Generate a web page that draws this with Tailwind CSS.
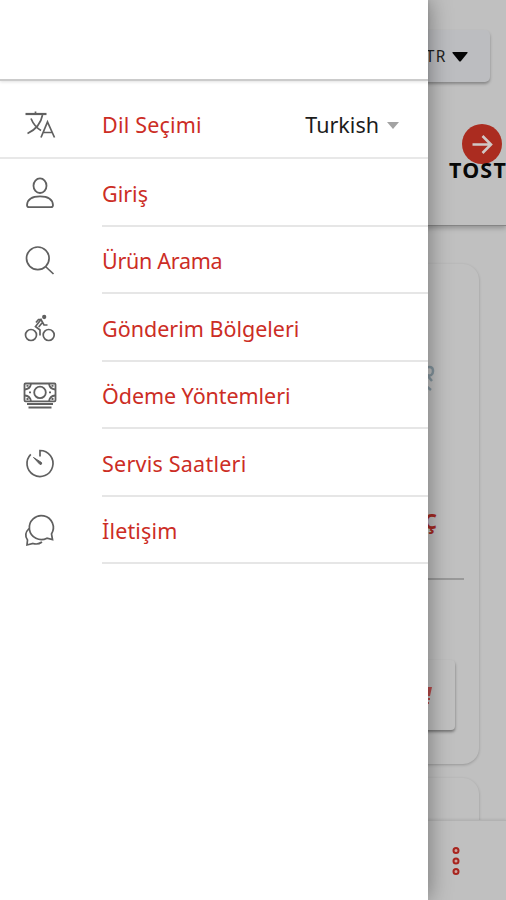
<!DOCTYPE html>
<html lang="tr">
<head>
    <meta charset="UTF-8">
    <meta name="viewport" content="width=device-width, initial-scale=1.0">
    <script src="https://cdn.jsdelivr.net/npm/@tailwindcss/browser@4"></script>
    <title>Menü</title>
</head>
<body class="relative h-[900px] w-[506px] overflow-hidden bg-[#c0c0c0] font-['Noto_Sans',sans-serif]">

    <!-- Page behind the drawer -->
    <div class="flex h-full flex-col">
        <header class="h-[226px] shrink-0 border-b border-[#858585] pt-[30px] shadow-[0_2px_5px_rgba(0,0,0,0.25)]">
            <div class="mr-4 ml-auto flex h-[52px] w-[100px] items-center justify-end gap-[5px] rounded-[5px] bg-[#bcbdc0] pt-px pr-[22px] shadow-[0_2px_3px_rgba(0,0,0,0.3)]">
                <span class="text-[15.500px] tracking-[1.500px] text-[#222]">TR</span>
                <svg class="h-[10px] w-4" viewBox="0 0 16 10"><path d="M1 0h14q1 0 .5 1L9 9q-1 1-2 0L.5 1Q0 0 1 0z" fill="#050505"/></svg>
            </div>
            <div class="mt-[42px] flex flex-col items-end">
                <svg class="mr-1 size-10" viewBox="0 0 40 40" fill="none" stroke="#d0c8c6" stroke-width="2.6">
                    <circle cx="20" cy="20" r="20" fill="#ab2c20" stroke="none"/>
                    <path d="M10.500 20.500h18M20.500 12l8.500 8.500-8.500 8.500"/>
                </svg>
                <span class="-mt-[8px] mr-[-1px] text-[21.500px] leading-7 font-bold tracking-[1.200px] text-[#080808]">TOST</span>
            </div>
        </header>
        <main class="flex grow flex-col gap-[14px] overflow-hidden pt-[38px] pr-[27px]">
            <section class="h-[500px] shrink-0 rounded-[16px] pt-[99px] shadow-[0_1px_3px_rgba(0,0,0,0.22)]">
                <div class="flex h-[32px] justify-end pr-[43px]">
                    <svg class="h-8 w-4" viewBox="0 0 16 32" fill="none" stroke="#84959e" stroke-width="2.500"><path d="M5 5q8-3 8 3t-7 4M7 12l5 6M6 23l5 4"/></svg>
                </div>
                <p class="mt-[110px] pr-[42px] text-right text-[21px] leading-[32px] font-bold text-[#a52a23]">Ç</p>
                <hr class="mt-[41px] mr-[15px] border-t-2 border-[#999]">
                <div class="mt-[80px] mr-6 flex h-[70px] items-center justify-end rounded-[4px] pr-[22px] shadow-[0_2px_3px_rgba(0,0,0,0.4)]">
                    <svg class="h-5 w-4" viewBox="0 0 16 20" fill="#b94a49"><path d="M9 2h6l-2 9H9zM9 13h4v2H9zM10 17h2v2h-2z"/></svg>
                </div>
            </section>
            <section class="h-[80px] shrink-0 rounded-[16px] shadow-[0_1px_3px_rgba(0,0,0,0.22)]"></section>
        </main>
        <footer class="z-10 flex h-[80px] shrink-0 items-center justify-end border-t border-[#b2b2b2] bg-[#c0c0c0] pr-[45px] shadow-[0_-1px_2px_rgba(0,0,0,0.08)]">
            <svg class="h-8 w-[10px]" viewBox="0 0 10 32" fill="#cfa59f" stroke="#a8241e" stroke-width="2">
                <circle cx="5" cy="5.500" r="2.500"/><circle cx="5" cy="16" r="2.500"/><circle cx="5" cy="26.500" r="2.500"/>
            </svg>
        </footer>
    </div>

    <!-- Drawer -->
    <aside class="absolute inset-y-0 left-0 z-20 w-[428px] bg-white shadow-[0_0_22px_rgba(0,0,0,0.42)]">
        <div class="h-[81px] border-b-2 border-[#cbcbcb] shadow-[0_1px_3px_rgba(0,0,0,0.12)]"></div>
        <div class="flex h-[78px] items-center border-b-2 border-[#e8e8e8] pt-[12px] pr-7 pl-5">
            <svg class="mr-[42px] size-10" viewBox="0 0 40 40" fill="none" stroke="#606060" stroke-width="1.700">
                <path d="M5.500 9h21" stroke-width="2.200"/><path d="M15.500 6.500v2.500M22.500 10C21 18 15 25 7.500 28.500M11 13.500c2 5 5 9 10 12M21 32.500l6.500-15.500L34.500 32.500M23.500 27.500h8.500"/>
            </svg>
            <span class="pt-px text-[21.500px] tracking-[0.200px] text-[#cc2d25]">Dil Seçimi</span>
            <span class="ml-auto pt-px text-[21.500px] text-[#1c1c1c]">Turkish</span>
            <svg class="mr-px ml-2 h-[7px] w-3" viewBox="0 0 12 7"><path d="M0 0h12L6 7z" fill="#a3a3a3"/></svg>
        </div>
        <nav class="text-[21.500px] text-[#cc2d25]">
            <a class="flex h-[67.500px] items-stretch pl-5">
                <svg class="mt-[14px] mr-[42px] size-10 shrink-0" viewBox="0 0 40 40" fill="none" stroke="#606060" stroke-width="1.800">
                    <ellipse cx="20" cy="12.700" rx="6.500" ry="7.300"/><path d="M9 34.200Q7 34.200 7 32C7.500 25.500 12 23.300 20 23.300S32.500 25.500 33 32Q33 34.200 31 34.200z"/>
                </svg>
                <span class="flex grow items-center border-b-2 border-[#e6e6e6] pt-[4px]">Giriş</span>
            </a>
            <a class="flex h-[67.500px] items-stretch pl-5">
                <svg class="mt-[13px] mr-[42px] size-10 shrink-0" viewBox="0 0 40 40" fill="none" stroke="#606060" stroke-width="1.700">
                    <circle cx="17.800" cy="18.300" r="11.300"/><path d="M25.500 26.500l8 7.500"/>
                </svg>
                <span class="flex grow items-center border-b-2 border-[#e6e6e6] pt-[4px] tracking-[-0.280px]">Ürün Arama</span>
            </a>
            <a class="flex h-[67.500px] items-stretch pl-5">
                <svg class="mt-[14px] mr-[42px] size-10 shrink-0" viewBox="0 0 40 40" fill="none" stroke="#606060" stroke-width="1.700">
                    <circle cx="11" cy="27" r="5.500"/><circle cx="28.700" cy="27" r="5.500"/><circle cx="24.200" cy="9" r="1.300" fill="#606060"/>
                    <path d="M20 27.500V22l-4.500-3.500 5.500-7 3 5.500h3.500M21.500 11.500h-3l-2.500 3M22 15l-3.300 4"/>
                </svg>
                <span class="flex grow items-center border-b-2 border-[#e6e6e6] pt-[4px]">Gönderim Bölgeleri</span>
            </a>
            <a class="flex h-[67.500px] items-stretch pl-5">
                <svg class="mt-[13px] mr-[42px] size-10 shrink-0" viewBox="0 0 40 40" fill="none" stroke="#606060" stroke-width="1.800">
                    <rect x="4.500" y="8.500" width="31" height="17.800" rx="1"/><circle cx="20" cy="17.400" r="5.800"/>
                    <path d="M5 14.500q5-.5 6-5.500M35 14.500q-5-.5-6-5.500M5 20.500q5 .5 6 5.500M35 20.500q-5 .5-6 5.500M7 29h26M8.500 32.500h23"/>
                    <path d="M9 17.400h2M29 17.400h2M6.500 10.800h2M31.500 10.800h2M6.500 24h2M31.500 24h2"/>
                </svg>
                <span class="flex grow items-center border-b-2 border-[#e6e6e6] pt-[4px] tracking-[-0.060px]">Ödeme Yöntemleri</span>
            </a>
            <a class="flex h-[67.500px] items-stretch pl-5">
                <svg class="mt-[13.500px] mr-[42px] size-10 shrink-0" viewBox="0 0 40 40" fill="none" stroke="#606060" stroke-width="1.700">
                    <path d="M10.800 11.300A13 13 0 1 0 20 7.500v6"/><path d="M13.500 14.500l8 5q1 2-1.500 2z" fill="#606060" stroke-width="1"/>
                </svg>
                <span class="flex grow items-center border-b-2 border-[#e6e6e6] pt-[4px] tracking-[0.230px]">Servis Saatleri</span>
            </a>
            <a class="flex h-[67.500px] items-stretch pl-5">
                <svg class="mt-[13.500px] mr-[42px] size-10 shrink-0" viewBox="0 0 40 40" fill="none" stroke="#606060" stroke-width="1.700">
                    <path d="M32.500 29.500l-1-5.500A12 12 0 1 0 27 28.200zM9 18.500c-4 4-4 8-1.500 11.500l-.5 5 6-1.500q5 1.500 9-1.500"/>
                </svg>
                <span class="flex grow items-center border-b-2 border-[#e6e6e6] pt-[4px] tracking-[0.150px]">İletişim</span>
            </a>
        </nav>
    </aside>
</body>
</html>
